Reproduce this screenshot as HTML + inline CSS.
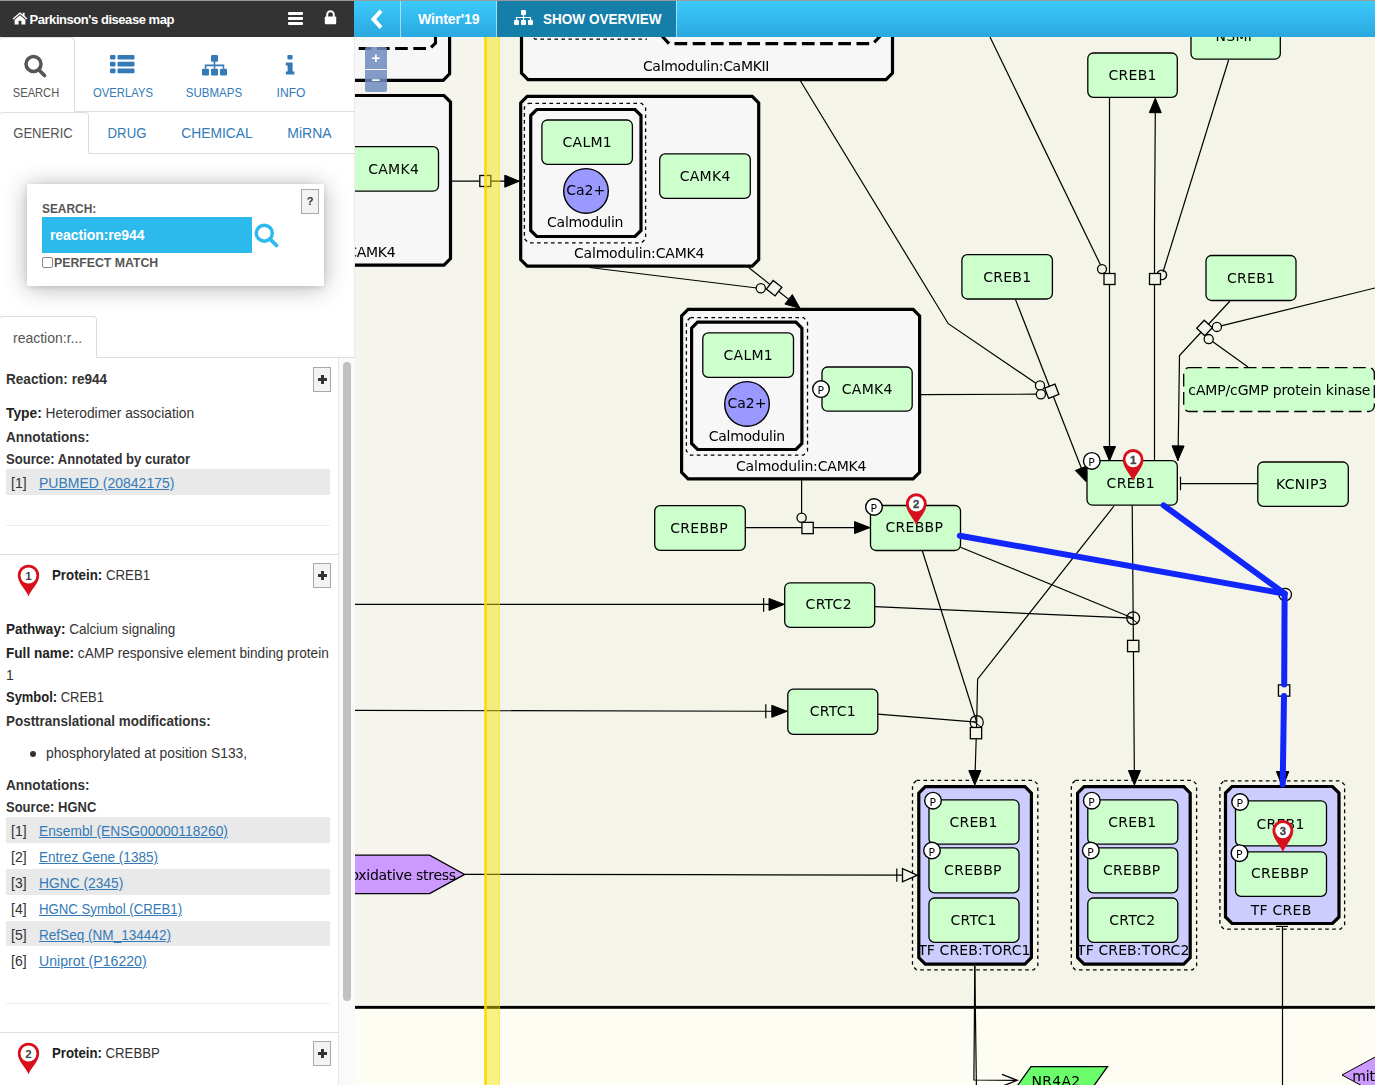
<!DOCTYPE html>
<html lang="en">
<head>
<meta charset="utf-8">
<title>Parkinson's disease map</title>
<style>
*{box-sizing:border-box;}
html,body{margin:0;padding:0;width:1375px;height:1085px;overflow:hidden;background:#fff;}
body{font-family:"Liberation Sans",sans-serif;font-size:14px;color:#333;position:relative;}
.abs{position:absolute;}
#topline{position:absolute;left:0;top:0;width:1375px;height:1px;background:#9a9a9a;z-index:50;}
#map{position:absolute;left:0;top:0;width:1375px;height:1085px;will-change:transform;}
#map text{font-family:"DejaVu Sans","Liberation Sans",sans-serif;fill:#000;}
#panel{position:absolute;left:0;top:0;width:355px;height:1085px;background:#fff;z-index:10;border-right:1px solid #ececec;}
#hdr{position:absolute;left:0;top:0;width:354px;height:37px;background:#333;color:#fff;}
#hdr .t{position:absolute;left:29.5px;top:12px;font-weight:bold;font-size:13px;letter-spacing:-0.45px;line-height:15px;white-space:nowrap;}
#bar{position:absolute;left:354px;top:0;width:1021px;height:37px;background:linear-gradient(#3ccafc,#2aa8df);z-index:12;color:#fff;}
#bar .sep{position:absolute;top:0;width:1px;height:37px;background:rgba(255,255,255,.55);}
#bar .ov{position:absolute;left:143px;top:0;width:179px;height:37px;background:#157fa9;}
#bar .lbl{position:absolute;font-weight:bold;font-size:14px;line-height:16px;white-space:nowrap;letter-spacing:-0.3px;}
.tab1{position:absolute;transform:translateX(-50%) scaleX(.865);font-size:13px;line-height:1;color:#337ab7;white-space:nowrap;top:86px;}
.tab2{position:absolute;top:126px;transform:translateX(-50%) scaleX(.96);font-size:14px;line-height:1;color:#337ab7;white-space:nowrap;}
.ln{position:absolute;background:#ddd;}
.b{font-weight:bold;}
.row{position:absolute;left:6px;white-space:nowrap;font-size:14px;line-height:16px;color:#333;}
.sx{display:inline-block;transform-origin:0 50%;white-space:nowrap;}
.row b{color:#222;}
.ann{position:absolute;left:6px;width:324px;height:25.7px;font-size:14px;line-height:16px;}
.ann.g{background:#e9e9e9;}
.ann .n{position:absolute;left:5px;top:6px;}
.ann .l{position:absolute;left:33px;top:6px;color:#337ab7;text-decoration:underline;white-space:nowrap;transform-origin:0 50%;}
.plus{position:absolute;left:313px;width:18px;height:25px;background:#f3f3f3;border:1px solid #a9a9a9;}
.plus:before{content:"";position:absolute;left:3.5px;top:10.2px;width:9.4px;height:2.8px;background:#333;}
.plus:after{content:"";position:absolute;left:6.8px;top:6.9px;width:2.8px;height:9.4px;background:#333;}
</style>
</head>
<body>
<svg id="map" width="1375" height="1085" viewBox="0 0 1375 1085">
<rect x="354" y="0" width="1021" height="1085" fill="#f4f4e9"/>
<rect x="354" y="0" width="131" height="1085" fill="#f5f5ee"/>
<rect x="354" y="1007" width="1021" height="78" fill="#fdfdf3"/>
<rect x="354" y="1005.9" width="1021" height="2.9" fill="#000"/>
<path d="M306.5,0 L443.1,0 L449.6,6.5 L449.6,73.8 L443.1,80.3 L306.5,80.3 L300,73.8 L300,6.5 Z" fill="#f7f7f7" stroke="#000" stroke-width="3.2"/>
<path d="M340.5,48.5 L430,48.5 L435.5,43 L435.5,30" fill="none" stroke="#000" stroke-width="3.1" stroke-dasharray="12.7 5.5"/>
<path d="M306.5,95.5 L444.0,95.5 L450.5,102.0 L450.5,258.7 L444.0,265.2 L306.5,265.2 L300,258.7 L300,102.0 Z" fill="#f7f7f7" stroke="#000" stroke-width="3.2"/>
<rect x="340" y="146.7" width="98.5" height="44.5" rx="5.5" ry="5.5" fill="#ccffcc" stroke="#000" stroke-width="1.3"/>
<text x="393.65" y="174.05" text-anchor="middle" font-size="14.0" letter-spacing="0.297">CAMK4</text>
<text x="371.28" y="256.80" text-anchor="middle" font-size="14.0" letter-spacing="-0.248">CAMK4</text>
<path d="M528.0,-20 L886.0,-20 L892.5,-13.5 L892.5,73.2 L886.0,79.7 L528.0,79.7 L521.5,73.2 L521.5,-13.5 Z" fill="#f7f7f7" stroke="#000" stroke-width="3.2"/>
<text x="706.05" y="70.70" text-anchor="middle" font-size="14.0" letter-spacing="-0.302">Calmodulin:CaMKII</text>
<path d="M529,33 L535,39.1 L647,39.1" fill="none" stroke="#000" stroke-width="1.3" stroke-dasharray="3.6 3.4"/>
<path d="M656.3,30 L669,43.6 L873,43.6 L886,30" fill="none" stroke="#000" stroke-width="3.1" stroke-dasharray="12.7 5.5" stroke-dashoffset="12.3"/>
<path d="M527.2,96.3 L752.2,96.3 L758.7,102.8 L758.7,259.7 L752.2,266.2 L527.2,266.2 L520.7,259.7 L520.7,102.8 Z" fill="#f7f7f7" stroke="#000" stroke-width="3.2"/>
<text x="639.12" y="257.60" text-anchor="middle" font-size="14.0" letter-spacing="-0.166">Calmodulin:CAMK4</text>
<path d="M528.4000000000001,103.3 L641.6000000000001,103.3 L645.6000000000001,107.3 L645.6000000000001,238.8 L641.6000000000001,242.8 L528.4000000000001,242.8 L524.4000000000001,238.8 L524.4000000000001,107.3 Z" fill="none" stroke="#000" stroke-width="1.3" stroke-dasharray="3.6 3.4"/>
<path d="M536.7,109.5 L635.0,109.5 L641.0,115.5 L641.0,230.5 L635.0,236.5 L536.7,236.5 L530.7,230.5 L530.7,115.5 Z" fill="#f7f7f7" stroke="#000" stroke-width="3.2"/>
<text x="585.16" y="226.80" text-anchor="middle" font-size="14.0" letter-spacing="-0.276">Calmodulin</text>
<rect x="541.9" y="120" width="90.5" height="44.3" rx="5.5" ry="5.5" fill="#ccffcc" stroke="#000" stroke-width="1.3"/>
<text x="587.29" y="147.25" text-anchor="middle" font-size="14.0" letter-spacing="0.289">CALM1</text>
<circle cx="586" cy="190.9" r="22.3" fill="#9999ff" stroke="#000" stroke-width="1.4"/>
<text x="585.70" y="194.80" text-anchor="middle" font-size="14.0" letter-spacing="0.000">Ca2+</text>
<rect x="659.7" y="153.9" width="90.6" height="44.5" rx="5.5" ry="5.5" fill="#ccffcc" stroke="#000" stroke-width="1.3"/>
<text x="705.15" y="181.25" text-anchor="middle" font-size="14.0" letter-spacing="0.297">CAMK4</text>
<path d="M688.1,309.4 L913.1,309.4 L919.6,315.9 L919.6,472.29999999999995 L913.1,478.79999999999995 L688.1,478.79999999999995 L681.6,472.29999999999995 L681.6,315.9 Z" fill="#f7f7f7" stroke="#000" stroke-width="3.2"/>
<text x="801.12" y="470.60" text-anchor="middle" font-size="14.0" letter-spacing="-0.166">Calmodulin:CAMK4</text>
<path d="M690.4,317.59999999999997 L803.5,317.59999999999997 L807.5,321.59999999999997 L807.5,451.09999999999997 L803.5,455.09999999999997 L690.4,455.09999999999997 L686.4,451.09999999999997 L686.4,321.59999999999997 Z" fill="none" stroke="#000" stroke-width="1.3" stroke-dasharray="3.6 3.4"/>
<path d="M697.6,322.2 L795.9,322.2 L801.9,328.2 L801.9,443.5 L795.9,449.5 L697.6,449.5 L691.6,443.5 L691.6,328.2 Z" fill="#f7f7f7" stroke="#000" stroke-width="3.2"/>
<text x="746.86" y="440.80" text-anchor="middle" font-size="14.0" letter-spacing="-0.276">Calmodulin</text>
<rect x="702.8" y="332.9" width="90.7" height="44.5" rx="5.5" ry="5.5" fill="#ccffcc" stroke="#000" stroke-width="1.3"/>
<text x="748.29" y="360.25" text-anchor="middle" font-size="14.0" letter-spacing="0.289">CALM1</text>
<circle cx="747" cy="403.9" r="22.3" fill="#9999ff" stroke="#000" stroke-width="1.4"/>
<text x="747.00" y="407.80" text-anchor="middle" font-size="14.0" letter-spacing="0.000">Ca2+</text>
<rect x="822" y="367" width="90.2" height="44.2" rx="5.5" ry="5.5" fill="#ccffcc" stroke="#000" stroke-width="1.3"/>
<text x="867.25" y="394.20" text-anchor="middle" font-size="14.0" letter-spacing="0.297">CAMK4</text>
<circle cx="821" cy="389.1" r="8.3" fill="#fff" stroke="#000" stroke-width="1.4"/>
<text x="820.7" y="394.3" text-anchor="middle" font-size="10.8">P</text>
<path d="M451,181.2 L521,181.2" fill="none" stroke="#000" stroke-width="1.2" />
<rect x="479.8" y="175.5" width="11" height="11" fill="#f4f4e9" stroke="#000" stroke-width="1.3"/>
<path d="M519.3,181.2 L504.8,187.2 L504.8,175.2 Z" fill="#000" stroke="#000" stroke-width="1"/>
<path d="M589.5,267.5 L757,288" fill="none" stroke="#000" stroke-width="1.2" />
<path d="M748.6,267.5 L799,307.5" fill="none" stroke="#000" stroke-width="1.2" />
<circle cx="760.8" cy="288.2" r="4.6" fill="#f4f4e9" stroke="#000" stroke-width="1.3"/>
<rect x="768.6" y="282.7" width="11" height="11" fill="#f4f4e9" stroke="#000" stroke-width="1.3" transform="rotate(38 774.1 288.2)"/>
<path d="M800.0,308.3 L784.9,304.1 L792.3,294.6 Z" fill="#000" stroke="#000" stroke-width="1"/>
<path d="M800.5,81 L948.3,323.7 L1037,384" fill="none" stroke="#000" stroke-width="1.2" />
<path d="M920.9,394.6 L1036.5,394.2" fill="none" stroke="#000" stroke-width="1.2" />
<path d="M1015.5,299.6 L1086,480" fill="none" stroke="#000" stroke-width="1.2" />
<circle cx="1040" cy="385.5" r="4.6" fill="#f4f4e9" stroke="#000" stroke-width="1.3"/>
<circle cx="1040.9" cy="394.2" r="4.6" fill="#f4f4e9" stroke="#000" stroke-width="1.3"/>
<rect x="1046.3" y="385.8" width="11" height="11" fill="#f4f4e9" stroke="#000" stroke-width="1.3" transform="rotate(-21 1051.8 391.3)"/>
<path d="M1086.2,481.8 L1075.3,470.5 L1086.5,466.1 Z" fill="#000" stroke="#000" stroke-width="1"/>
<path d="M990,37 L1102,268" fill="none" stroke="#000" stroke-width="1.2" />
<circle cx="1102" cy="269.1" r="4.5" fill="#f4f4e9" stroke="#000" stroke-width="1.3"/>
<path d="M1109.5,97 L1109.5,461" fill="none" stroke="#000" stroke-width="1.2" />
<rect x="1104.0" y="273.5" width="11" height="11" fill="#f4f4e9" stroke="#000" stroke-width="1.3"/>
<path d="M1109.5,461.0 L1103.5,446.5 L1115.5,446.5 Z" fill="#000" stroke="#000" stroke-width="1"/>
<path d="M1154.5,461 L1154.5,227 L1155.4,100" fill="none" stroke="#000" stroke-width="1.2" />
<circle cx="1161.8" cy="274.9" r="4.8" fill="#f4f4e9" stroke="#000" stroke-width="1.3"/>
<rect x="1149.5" y="273.5" width="11" height="11" fill="#f4f4e9" stroke="#000" stroke-width="1.3"/>
<path d="M1155.3,98.2 L1161.3,112.7 L1149.3,112.7 Z" fill="#000" stroke="#000" stroke-width="1"/>
<path d="M1228.6,60 L1163,272" fill="none" stroke="#000" stroke-width="1.2" />
<path d="M1230,301 L1179.5,355.5 L1178,461" fill="none" stroke="#000" stroke-width="1.2" />
<path d="M1217,326.9 L1375,288" fill="none" stroke="#000" stroke-width="1.2" />
<path d="M1209,339.1 L1248,367" fill="none" stroke="#000" stroke-width="1.2" />
<rect x="1199.0" y="322.5" width="11" height="11" fill="#f4f4e9" stroke="#000" stroke-width="1.3" transform="rotate(-47 1204.5 328)"/>
<circle cx="1216.9" cy="326.9" r="4.6" fill="#f4f4e9" stroke="#000" stroke-width="1.3"/>
<circle cx="1208.7" cy="339.1" r="4.6" fill="#f4f4e9" stroke="#000" stroke-width="1.3"/>
<path d="M1177.8,460.4 L1172.1,445.8 L1184.1,446.0 Z" fill="#000" stroke="#000" stroke-width="1"/>
<path d="M1180.5,483.7 L1257,483.7" fill="none" stroke="#000" stroke-width="1.2" />
<path d="M1180.5,476.7 L1180.5,490.2" fill="none" stroke="#000" stroke-width="1.2" />
<path d="M745,527.6 L870,527.6" fill="none" stroke="#000" stroke-width="1.2" />
<path d="M801.6,480 L801.6,518" fill="none" stroke="#000" stroke-width="1.2" />
<circle cx="801.6" cy="517.8" r="4.6" fill="#f4f4e9" stroke="#000" stroke-width="1.3"/>
<rect x="801.95" y="522.35" width="11.3" height="11.3" fill="#f4f4e9" stroke="#000" stroke-width="1.3"/>
<path d="M870.0,527.6 L854.5,533.6 L854.5,521.6 Z" fill="#000" stroke="#000" stroke-width="1"/>
<path d="M354,604.4 L784,604.4" fill="none" stroke="#000" stroke-width="1.2" />
<path d="M763.6,598 L763.6,611.8" fill="none" stroke="#000" stroke-width="1.2" />
<path d="M784.2,604.4 L769.0,610.4 L769.0,598.4 Z" fill="#000" stroke="#000" stroke-width="1"/>
<path d="M354,710.4 L787,711.3" fill="none" stroke="#000" stroke-width="1.2" />
<path d="M765.8,704.2 L765.8,718.2" fill="none" stroke="#000" stroke-width="1.2" />
<path d="M787.2,711.3 L771.8,717.3 L771.8,705.3 Z" fill="#000" stroke="#000" stroke-width="1"/>
<circle cx="1133.2" cy="618.2" r="6.4" fill="#f4f4e9" stroke="#000" stroke-width="1.2"/>
<path d="M1129.7,617.2 L1137.7,623.2" stroke="#000" stroke-width="1" fill="none"/>
<circle cx="976.7" cy="722.2" r="6.6" fill="#f4f4e9" stroke="#000" stroke-width="1.2"/>
<path d="M973.2,721.2 L981.2,727.2" stroke="#000" stroke-width="1" fill="none"/>
<path d="M874.7,606.6 L1133.2,618.2" fill="none" stroke="#000" stroke-width="1.2" />
<path d="M960.5,547.2 L1133.2,618.2" fill="none" stroke="#000" stroke-width="1.2" />
<path d="M1132.2,505 L1133.2,618.2 L1134.4,780" fill="none" stroke="#000" stroke-width="1.2" />
<path d="M1114,506 L977.6,679.1 L976.7,722.2" fill="none" stroke="#000" stroke-width="1.2" />
<path d="M922.3,550.8 L976.7,722.2" fill="none" stroke="#000" stroke-width="1.2" />
<path d="M877.8,714.2 L976.7,722.2" fill="none" stroke="#000" stroke-width="1.2" />
<path d="M976.7,722.2 L974.9,780" fill="none" stroke="#000" stroke-width="1.2" />
<rect x="1127.55" y="640.35" width="11.3" height="11.3" fill="#f4f4e9" stroke="#000" stroke-width="1.3"/>
<rect x="970.35" y="727.45" width="11.3" height="11.3" fill="#f4f4e9" stroke="#000" stroke-width="1.3"/>
<path d="M974.8,785.0 L968.8,770.5 L980.8,770.5 Z" fill="#000" stroke="#000" stroke-width="1"/>
<path d="M1134.4,785.0 L1128.4,770.5 L1140.4,770.5 Z" fill="#000" stroke="#000" stroke-width="1"/>
<path d="M340,855.2 L429.6,855.2 L464.6,874.4 L429.6,893.6 L340,893.6 Z" fill="#cc99ff" stroke="#000" stroke-width="1.3"/>
<text x="403.10" y="879.60" text-anchor="middle" font-size="14.0" letter-spacing="-0.289">oxidative stress</text>
<path d="M464.6,874.4 L700,874.6 L902,875.2" fill="none" stroke="#000" stroke-width="1.2" />
<path d="M896.8,868.5 L896.8,881.8" fill="none" stroke="#000" stroke-width="1.2" />
<path d="M902.5,868.6 L917.3,875.2 L902.5,881.8 Z" fill="#f4f4e9" stroke="#000" stroke-width="1.3"/>
<path d="M916.5,780.4000000000001 L1033.8,780.4000000000001 L1037.8,784.4000000000001 L1037.8,965.8000000000001 L1033.8,969.8000000000001 L916.5,969.8000000000001 L912.5,965.8000000000001 L912.5,784.4000000000001 Z" fill="none" stroke="#000" stroke-width="1.3" stroke-dasharray="3.6 3.4"/>
<path d="M925.3,786.7 L1024.8999999999999,786.7 L1031.3999999999999,793.2 L1031.3999999999999,957.6 L1024.8999999999999,964.1 L925.3,964.1 L918.8,957.6 L918.8,793.2 Z" fill="#ccccff" stroke="#000" stroke-width="3.2"/>
<text x="974.36" y="955.00" text-anchor="middle" font-size="14.0" letter-spacing="0.111">TF CREB:TORC1</text>
<rect x="929.0" y="799.8" width="90" height="44.4" rx="5.5" ry="5.5" fill="#ccffcc" stroke="#000" stroke-width="1.3"/>
<text x="973.54" y="826.50" text-anchor="middle" font-size="14.0" letter-spacing="0.281">CREB1</text>
<rect x="929.0" y="847.9" width="90" height="44.9" rx="5.5" ry="5.5" fill="#ccffcc" stroke="#000" stroke-width="1.3"/>
<text x="972.94" y="875.00" text-anchor="middle" font-size="14.0" letter-spacing="0.280">CREBBP</text>
<rect x="929.0" y="898" width="90" height="44.4" rx="5.5" ry="5.5" fill="#ccffcc" stroke="#000" stroke-width="1.3"/>
<text x="973.53" y="924.70" text-anchor="middle" font-size="14.0" letter-spacing="0.269">CRTC1</text>
<circle cx="933.0" cy="800.7" r="8.3" fill="#fff" stroke="#000" stroke-width="1.4"/>
<text x="932.7" y="805.9" text-anchor="middle" font-size="10.8">P</text>
<circle cx="932.0" cy="850.5" r="8.3" fill="#fff" stroke="#000" stroke-width="1.4"/>
<text x="931.7" y="855.7" text-anchor="middle" font-size="10.8">P</text>
<path d="M1075.3,780.4000000000001 L1192.6,780.4000000000001 L1196.6,784.4000000000001 L1196.6,965.8000000000001 L1192.6,969.8000000000001 L1075.3,969.8000000000001 L1071.3,965.8000000000001 L1071.3,784.4000000000001 Z" fill="none" stroke="#000" stroke-width="1.3" stroke-dasharray="3.6 3.4"/>
<path d="M1084.1,786.7 L1183.6999999999998,786.7 L1190.1999999999998,793.2 L1190.1999999999998,957.6 L1183.6999999999998,964.1 L1084.1,964.1 L1077.6,957.6 L1077.6,793.2 Z" fill="#ccccff" stroke="#000" stroke-width="3.2"/>
<text x="1133.26" y="955.00" text-anchor="middle" font-size="14.0" letter-spacing="0.111">TF CREB:TORC2</text>
<rect x="1087.8" y="799.8" width="90" height="44.4" rx="5.5" ry="5.5" fill="#ccffcc" stroke="#000" stroke-width="1.3"/>
<text x="1132.34" y="826.50" text-anchor="middle" font-size="14.0" letter-spacing="0.281">CREB1</text>
<rect x="1087.8" y="847.9" width="90" height="44.9" rx="5.5" ry="5.5" fill="#ccffcc" stroke="#000" stroke-width="1.3"/>
<text x="1131.74" y="875.00" text-anchor="middle" font-size="14.0" letter-spacing="0.280">CREBBP</text>
<rect x="1087.8" y="898" width="90" height="44.4" rx="5.5" ry="5.5" fill="#ccffcc" stroke="#000" stroke-width="1.3"/>
<text x="1132.33" y="924.70" text-anchor="middle" font-size="14.0" letter-spacing="0.269">CRTC2</text>
<circle cx="1091.8" cy="800.7" r="8.3" fill="#fff" stroke="#000" stroke-width="1.4"/>
<text x="1091.5" y="805.9" text-anchor="middle" font-size="10.8">P</text>
<circle cx="1090.8" cy="850.5" r="8.3" fill="#fff" stroke="#000" stroke-width="1.4"/>
<text x="1090.5" y="855.7" text-anchor="middle" font-size="10.8">P</text>
<path d="M1223.9,780.9 L1340.6000000000001,780.9 L1344.6000000000001,784.9 L1344.6000000000001,925.0999999999999 L1340.6000000000001,929.0999999999999 L1223.9,929.0999999999999 L1219.9,925.0999999999999 L1219.9,784.9 Z" fill="none" stroke="#000" stroke-width="1.3" stroke-dasharray="3.6 3.4"/>
<path d="M1232.0,786.5 L1332.5,786.5 L1339.0,793.0 L1339.0,917.0 L1332.5,923.5 L1232.0,923.5 L1225.5,917.0 L1225.5,793.0 Z" fill="#ccccff" stroke="#000" stroke-width="3.2"/>
<text x="1281.13" y="914.60" text-anchor="middle" font-size="14.0" letter-spacing="0.253">TF CREB</text>
<rect x="1235.5" y="800.8" width="91" height="45" rx="5.5" ry="5.5" fill="#ccffcc" stroke="#000" stroke-width="1.3"/>
<text x="1280.54" y="828.90" text-anchor="middle" font-size="14.0" letter-spacing="0.281">CREB1</text>
<rect x="1235.5" y="851.8" width="91" height="44.6" rx="5.5" ry="5.5" fill="#ccffcc" stroke="#000" stroke-width="1.3"/>
<text x="1279.84" y="877.80" text-anchor="middle" font-size="14.0" letter-spacing="0.280">CREBBP</text>
<circle cx="1240.1" cy="802" r="8.3" fill="#fff" stroke="#000" stroke-width="1.4"/>
<text x="1239.8" y="807.2" text-anchor="middle" font-size="10.8">P</text>
<circle cx="1239.5" cy="853.2" r="8.3" fill="#fff" stroke="#000" stroke-width="1.4"/>
<text x="1239.2" y="858.4" text-anchor="middle" font-size="10.8">P</text>
<path d="M974.8,966 L973.9,1080 L1016,1080.4" fill="none" stroke="#000" stroke-width="1.2" />
<path d="M974.8,966 L976.4,1086" fill="none" stroke="#000" stroke-width="1.2" />
<path d="M1002,1074.3 L1017.2,1080.3 L1002,1086.3" fill="none" stroke="#000" stroke-width="1.3"/>
<path d="M1282.5,926.4 L1282.5,1085" fill="none" stroke="#000" stroke-width="1.2" />
<path d="M1276,926.4 L1288,926.4" fill="none" stroke="#000" stroke-width="1.2" />
<path d="M1031,1066.6 L1107.5,1066.6 L1083,1101 L1006.5,1101 Z" fill="#6aff6a" stroke="#000" stroke-width="1.3"/>
<text x="1056.04" y="1086.40" text-anchor="middle" font-size="14.0" letter-spacing="0.286">NR4A2</text>
<path d="M1342,1075 L1377,1056 L1400,1056 L1400,1094 L1377,1094 Z" fill="#cc99ff" stroke="#000" stroke-width="1"/>
<text x="1352.30" y="1081.30" text-anchor="start" font-size="14.0" letter-spacing="-0.158">mito</text>
<rect x="1087.8" y="53" width="89.5" height="44.3" rx="5.5" ry="5.5" fill="#ccffcc" stroke="#000" stroke-width="1.3"/>
<text x="1132.69" y="80.25" text-anchor="middle" font-size="14.0" letter-spacing="0.281">CREB1</text>
<rect x="1191" y="10" width="89.3" height="49.2" rx="5.5" ry="5.5" fill="#ccffcc" stroke="#000" stroke-width="1.3"/>
<text x="1235.80" y="41.30" text-anchor="middle" font-size="14.0" letter-spacing="0.296">NSMF</text>
<rect x="961.9" y="254.6" width="90.5" height="44.4" rx="5.5" ry="5.5" fill="#ccffcc" stroke="#000" stroke-width="1.3"/>
<text x="1007.29" y="281.90" text-anchor="middle" font-size="14.0" letter-spacing="0.281">CREB1</text>
<rect x="1206" y="255.5" width="90" height="45" rx="5.5" ry="5.5" fill="#ccffcc" stroke="#000" stroke-width="1.3"/>
<text x="1251.14" y="283.10" text-anchor="middle" font-size="14.0" letter-spacing="0.281">CREB1</text>
<rect x="1183.7" y="367.6" width="190.6" height="43.9" rx="5.5" ry="5.5" fill="#ccffcc" stroke="#000" stroke-width="1.3" stroke-dasharray="12.7 5.5"/>
<text x="1279.32" y="394.65" text-anchor="middle" font-size="14.0" letter-spacing="-0.155">cAMP/cGMP protein kinase</text>
<rect x="1087" y="460.6" width="90.3" height="44.6" rx="5.5" ry="5.5" fill="#ccffcc" stroke="#000" stroke-width="1.3"/>
<text x="1130.74" y="488.00" text-anchor="middle" font-size="14.0" letter-spacing="0.281">CREB1</text>
<rect x="1257.8" y="462" width="90.5" height="44.3" rx="5.5" ry="5.5" fill="#ccffcc" stroke="#000" stroke-width="1.3"/>
<text x="1301.93" y="489.25" text-anchor="middle" font-size="14.0" letter-spacing="0.251">KCNIP3</text>
<rect x="654.7" y="505.7" width="90.6" height="44.6" rx="5.5" ry="5.5" fill="#ccffcc" stroke="#000" stroke-width="1.3"/>
<text x="699.14" y="532.70" text-anchor="middle" font-size="14.0" letter-spacing="0.280">CREBBP</text>
<rect x="870.5" y="505.5" width="90" height="45" rx="5.5" ry="5.5" fill="#ccffcc" stroke="#000" stroke-width="1.3"/>
<text x="914.34" y="531.70" text-anchor="middle" font-size="14.0" letter-spacing="0.280">CREBBP</text>
<rect x="784.7" y="582.8" width="90" height="44.6" rx="5.5" ry="5.5" fill="#ccffcc" stroke="#000" stroke-width="1.3"/>
<text x="828.73" y="609.20" text-anchor="middle" font-size="14.0" letter-spacing="0.269">CRTC2</text>
<rect x="787.8" y="689.1" width="90" height="45.3" rx="5.5" ry="5.5" fill="#ccffcc" stroke="#000" stroke-width="1.3"/>
<text x="832.93" y="715.80" text-anchor="middle" font-size="14.0" letter-spacing="0.269">CRTC1</text>
<circle cx="1091.8" cy="460.9" r="8.3" fill="#fff" stroke="#000" stroke-width="1.4"/>
<text x="1091.5" y="466.1" text-anchor="middle" font-size="10.8">P</text>
<circle cx="874" cy="507" r="8.3" fill="#fff" stroke="#000" stroke-width="1.4"/>
<text x="873.7" y="512.2" text-anchor="middle" font-size="10.8">P</text>
<circle cx="1285.2" cy="594.6" r="6.3" fill="#f4f4e9" stroke="#000" stroke-width="1.3"/>
<rect x="1278.4499999999998" y="684.85" width="11.3" height="11.3" fill="#f4f4e9" stroke="#000" stroke-width="1.3"/>
<path d="M1282.6,787.5 L1276.4,771.5 L1288.8,771.5 Z" fill="#000" stroke="#000" stroke-width="1"/>
<path d="M959.8,535.7 L1284.6,593.6" fill="none" stroke="#1026fa" stroke-width="6" stroke-linecap="round"/>
<path d="M1163.6,505.3 L1284.6,593.6" fill="none" stroke="#1026fa" stroke-width="6" stroke-linecap="round"/>
<path d="M1284.6,593.6 L1284.2,684.5" fill="none" stroke="#1026fa" stroke-width="6" stroke-linecap="round"/>
<path d="M1284.0,696 L1282.7,784.5" fill="none" stroke="#1026fa" stroke-width="6" stroke-linecap="round"/>
<g transform="translate(1133.1,481)"><path d="M0,0 C-2.5,-6.8 -10.4,-13.6 -10.4,-21.6 A10.4,10.4 0 1 1 10.4,-21.6 C10.4,-13.6 2.5,-6.8 0,0 Z" fill="#d80f1c"/><circle cx="0" cy="-21.4" r="7.6" fill="#fff"/><text x="0" y="-17.3" text-anchor="middle" font-size="11.5" font-weight="bold" style="font-family:'Liberation Sans',sans-serif;fill:#444;stroke:#444;stroke-width:0.3px">1</text></g>
<g transform="translate(916.3,525.2)"><path d="M0,0 C-2.5,-6.8 -10.4,-13.6 -10.4,-21.6 A10.4,10.4 0 1 1 10.4,-21.6 C10.4,-13.6 2.5,-6.8 0,0 Z" fill="#d80f1c"/><circle cx="0" cy="-21.4" r="7.6" fill="#fff"/><text x="0" y="-17.3" text-anchor="middle" font-size="11.5" font-weight="bold" style="font-family:'Liberation Sans',sans-serif;fill:#444;stroke:#444;stroke-width:0.3px">2</text></g>
<g transform="translate(1282.9,852)"><path d="M0,0 C-2.5,-6.8 -10.4,-13.6 -10.4,-21.6 A10.4,10.4 0 1 1 10.4,-21.6 C10.4,-13.6 2.5,-6.8 0,0 Z" fill="#d80f1c"/><circle cx="0" cy="-21.4" r="7.6" fill="#fff"/><text x="0" y="-17.3" text-anchor="middle" font-size="11.5" font-weight="bold" style="font-family:'Liberation Sans',sans-serif;fill:#444;stroke:#444;stroke-width:0.3px">3</text></g>
<rect x="484.2" y="0" width="15.8" height="1085" fill="#f8e200" fill-opacity="0.46"/>
<rect x="484.2" y="0" width="2.7" height="1085" fill="#f6da00" fill-opacity="0.85"/>
<rect x="499" y="0" width="1" height="1085" fill="#f7dc00" fill-opacity="0.35"/>
</svg>

<!-- zoom control -->
<div class="abs" style="left:365px;top:47px;width:22px;height:22px;background:rgba(110,140,190,.85);border-radius:2px 2px 0 0;z-index:5;color:#fff;font-weight:bold;font-size:15px;line-height:22px;text-align:center;">+</div>
<div class="abs" style="left:365px;top:70px;width:22px;height:22px;background:rgba(110,140,190,.85);border-radius:0 0 2px 2px;z-index:5;color:#fff;font-weight:bold;font-size:15px;line-height:20px;text-align:center;">&minus;</div>

<div id="bar">
  <svg class="abs" style="left:14px;top:8px" width="16" height="22" viewBox="0 0 16 22"><path d="M13,2.8 L5.5,11.2 L13,19.6" fill="none" stroke="#fff" stroke-width="4"/></svg>
  <div class="sep" style="left:46px"></div>
  <div class="lbl" style="left:64px;top:11px;letter-spacing:-0.1px;">Winter'19</div>
  <div class="sep" style="left:142px"></div>
  <div class="ov"></div>
  <svg class="abs" style="left:160px;top:10px" width="19" height="16" viewBox="0 0 19 16"><g fill="#fff"><rect x="7" y="0" width="5" height="5" rx="1"/><rect x="0" y="10" width="5" height="5" rx="1"/><rect x="7" y="10" width="5" height="5" rx="1"/><rect x="14" y="10" width="5" height="5" rx="1"/></g><path d="M9.5,5 V10 M2.5,10 V7.5 H16.5 V10" fill="none" stroke="#fff" stroke-width="1.2"/></svg>
  <div class="lbl sx" style="left:189px;top:11px;transform:scaleX(.967);letter-spacing:0;">SHOW OVERVIEW</div>
  <div class="sep" style="left:322px"></div>
</div>

<div id="panel">
  <div id="hdr">
    <svg class="abs" style="left:12px;top:11px" width="16" height="14" viewBox="0 0 16 14"><path d="M8,1.2 L0.6,7.4 L1.5,8.4 L8,3 L14.5,8.4 L15.4,7.4 L12.6,5 V1.8 H10.8 V3.5 Z" fill="#fff"/><path d="M8,4.2 L2.6,8.7 V13.4 H6.6 V9.8 H9.4 V13.4 H13.4 V8.7 Z" fill="#fff"/></svg>
    <div class="t">Parkinson's disease map</div>
    <div class="abs" style="left:288px;top:12px;width:15px;height:3px;background:#fff;border-radius:1px;box-shadow:0 5px 0 #fff,0 10px 0 #fff;"></div>
    <svg class="abs" style="left:324px;top:10px" width="13" height="15" viewBox="0 0 13 15"><path d="M3.2,7 V4.6 a3.3,3.3 0 0 1 6.6,0 V7" fill="none" stroke="#fff" stroke-width="1.9"/><rect x="0.8" y="6.6" width="11.4" height="7.6" rx="1" fill="#fff"/></svg>
  </div>

  <!-- main tabs -->
  <div class="ln" style="left:0;top:111px;width:355px;height:1px;"></div>
  <div class="abs" style="left:-1px;top:37px;width:76px;height:75px;border:1px solid #ddd;border-bottom:1px solid #fff;border-radius:4px 4px 0 0;background:#fff;"></div>
  <svg class="abs" style="left:23px;top:53px" width="24" height="25" viewBox="0 0 24 25"><circle cx="10.5" cy="11" r="7.5" fill="none" stroke="#555" stroke-width="3.5"/><path d="M16,17 L21.5,22.5" stroke="#555" stroke-width="3.6" stroke-linecap="round"/></svg>
  <div class="tab1" style="left:36px;color:#555;transform:translateX(-50%) scaleX(.855);">SEARCH</div>
  <svg class="abs" style="left:110px;top:55px" width="25" height="19" viewBox="0 0 25 19"><g fill="#337ab7"><rect x="0" y="0" width="5.5" height="4.6" rx="1"/><rect x="7.5" y="0" width="17" height="4.6" rx="1"/><rect x="0" y="6.8" width="5.5" height="4.6" rx="1"/><rect x="7.5" y="6.8" width="17" height="4.6" rx="1"/><rect x="0" y="13.6" width="5.5" height="4.6" rx="1"/><rect x="7.5" y="13.6" width="17" height="4.6" rx="1"/></g></svg>
  <div class="tab1" style="left:123px;">OVERLAYS</div>
  <svg class="abs" style="left:202px;top:55px" width="25" height="21.2" viewBox="0 0 25 20" preserveAspectRatio="none"><g fill="#337ab7"><rect x="9" y="0" width="7" height="6.4" rx="1.2"/><rect x="0" y="13" width="7" height="6.4" rx="1.2"/><rect x="9" y="13" width="7" height="6.4" rx="1.2"/><rect x="18" y="13" width="7" height="6.4" rx="1.2"/></g><path d="M12.5,6 V13 M3.5,13 V9.8 H21.5 V13" fill="none" stroke="#337ab7" stroke-width="1.5"/></svg>
  <div class="tab1" style="left:214.3px;transform:translateX(-50%) scaleX(.885);">SUBMAPS</div>
  <svg class="abs" style="left:285px;top:55px" width="10" height="20" viewBox="0 0 10 20"><g fill="#337ab7"><rect x="2.4" y="0" width="5.2" height="4.4" rx="0.8"/><path d="M0.8,7.6 H7.6 V16.4 H9.4 V19.4 H0.8 V16.4 H2.6 V10.6 H0.8 Z"/></g></svg>
  <div class="tab1" style="left:291px;transform:translateX(-50%) scaleX(.93);">INFO</div>

  <!-- sub tabs -->
  <div class="ln" style="left:0;top:153px;width:355px;height:1px;"></div>
  <div class="abs" style="left:-1px;top:112px;width:90px;height:42px;border:1px solid #ddd;border-bottom:1px solid #fff;border-radius:4px 4px 0 0;background:#fff;"></div>
  <div class="tab2" style="left:43.2px;color:#555;transform:translateX(-50%) scaleX(.934);">GENERIC</div>
  <div class="tab2" style="left:127px;transform:translateX(-50%) scaleX(.94);">DRUG</div>
  <div class="tab2" style="left:216.5px;transform:translateX(-50%) scaleX(.985);">CHEMICAL</div>
  <div class="tab2" style="left:309.5px;transform:translateX(-50%) scaleX(1.0);">MiRNA</div>

  <!-- search card -->
  <div class="abs" style="left:27px;top:184px;width:297px;height:102px;background:#fff;box-shadow:0 2px 22px 0 rgba(0,0,0,.30),0 1px 5px 0 rgba(0,0,0,.10);"></div>
  <div class="abs b sx" style="left:42px;top:201px;font-size:13px;line-height:15px;color:#555;transform:scaleX(.915);">SEARCH:</div>
  <div class="abs" style="left:42px;top:217px;width:210px;height:36px;background:#2cb9ec;"></div>
  <div class="abs b" style="left:50px;top:227px;font-size:14px;line-height:16px;color:#fff;letter-spacing:-0.1px;">reaction:re944</div>
  <svg class="abs" style="left:253px;top:222px" width="26" height="26" viewBox="0 0 26 26"><circle cx="11.3" cy="11.2" r="8" fill="none" stroke="#2dbbed" stroke-width="3.5"/><path d="M17.6,17.6 L23.4,23.4" stroke="#2dbbed" stroke-width="3.8" stroke-linecap="round"/></svg>
  <div class="abs" style="left:42px;top:257px;width:11px;height:11px;border:1px solid #8a8a8a;border-radius:2px;background:#fff;"></div>
  <div class="abs b sx" style="left:54px;top:255px;font-size:13px;line-height:15px;color:#555;transform:scaleX(.945);">PERFECT MATCH</div>
  <div class="abs b" style="left:301px;top:189px;width:18px;height:25px;background:#f3f3f3;border:1px solid #a9a9a9;font-size:11px;line-height:23px;text-align:center;color:#333;">?</div>

  <!-- results tab -->
  <div class="ln" style="left:0;top:357px;width:355px;height:1px;"></div>
  <div class="abs" style="left:-1px;top:316px;width:98px;height:42px;border:1px solid #ddd;border-bottom:1px solid #fff;border-radius:4px 4px 0 0;background:#fff;"></div>
  <div class="abs" style="left:13px;top:330px;font-size:14px;line-height:16px;color:#555;">reaction:r...</div>

  <!-- scrollbar -->
  <div class="abs" style="left:338px;top:358px;width:17px;height:727px;background:#fafafa;border-left:1px solid #e6e6e6;"></div>
  <div class="abs" style="left:343.3px;top:361.5px;width:7.6px;height:639.5px;background:#c1c1c1;border-radius:4px;"></div>

  <!-- reaction -->
  <div class="row b" style="top:371px;font-size:14px;"><span class="sx" style="transform:scaleX(.97)">Reaction: re944</span></div>
  <div class="plus" style="top:367px;"></div>
  <div class="row" style="top:405px;"><span class="sx" style="transform:scaleX(.984)"><b>Type:</b> Heterodimer association</span></div>
  <div class="row b" style="top:429px;"><span class="sx" style="transform:scaleX(.969)">Annotations:</span></div>
  <div class="row b" style="top:451px;"><span class="sx" style="transform:scaleX(.934)">Source: Annotated by curator</span></div>
  <div class="ann g" style="top:469px;"><span class="n">[1]</span><span class="l">PUBMED (20842175)</span></div>
  <div class="ln" style="left:6px;top:525px;width:324px;height:1px;background:#eee;"></div>
  <div class="ln" style="left:0;top:554px;width:338px;height:1px;"></div>

  <!-- protein 1 -->
  <svg class="abs" style="left:16.9px;top:563.8px;overflow:visible" width="23" height="33" viewBox="0 0 23 33"><path d="M11.5,32.2 C9,25.5 0.8,19 0.8,11.4 A10.7,10.7 0 1 1 22.2,11.4 C22.2,19 14,25.5 11.5,32.2 Z" fill="#d80f1c"/><circle cx="11.5" cy="11.5" r="8" fill="#fff"/><text x="11.5" y="15.6" text-anchor="middle" font-size="11.5" font-weight="bold" font-family="'Liberation Sans',sans-serif" fill="#444">1</text></svg>
  <div class="row" style="left:52px;top:567px;"><span class="sx" style="transform:scaleX(.949)"><b>Protein:</b> CREB1</span></div>
  <div class="plus" style="top:563px;"></div>
  <div class="row" style="top:621px;"><span class="sx" style="transform:scaleX(.967)"><b>Pathway:</b> Calcium signaling</span></div>
  <div class="row" style="top:645px;"><span class="sx" style="transform:scaleX(.972)"><b>Full name:</b> cAMP responsive element binding protein</span></div>
  <div class="row" style="top:667px;">1</div>
  <div class="row" style="top:689px;"><span class="sx" style="transform:scaleX(.925)"><b>Symbol:</b> CREB1</span></div>
  <div class="row b" style="top:713px;"><span class="sx" style="transform:scaleX(.96)">Posttranslational modifications:</span></div>
  <div class="abs" style="left:29.5px;top:750.5px;width:6px;height:6px;border-radius:50%;background:#333;"></div>
  <div class="row" style="left:46px;top:745px;"><span class="sx" style="transform:scaleX(.986)">phosphorylated at position S133,</span></div>
  <div class="row b" style="top:777px;"><span class="sx" style="transform:scaleX(.969)">Annotations:</span></div>
  <div class="row b" style="top:799px;"><span class="sx" style="transform:scaleX(.929)">Source: HGNC</span></div>
  <div class="ann g" style="top:817.1px;"><span class="n">[1]</span><span class="l" style="transform:scaleX(.984)">Ensembl (ENSG00000118260)</span></div>
  <div class="ann" style="top:843px;"><span class="n">[2]</span><span class="l" style="transform:scaleX(.968)">Entrez Gene (1385)</span></div>
  <div class="ann g" style="top:869px;"><span class="n">[3]</span><span class="l" style="transform:scaleX(.985)">HGNC (2345)</span></div>
  <div class="ann" style="top:894.9px;"><span class="n">[4]</span><span class="l" style="transform:scaleX(.943)">HGNC Symbol (CREB1)</span></div>
  <div class="ann g" style="top:920.8px;"><span class="n">[5]</span><span class="l" style="transform:scaleX(.969)">RefSeq (NM_134442)</span></div>
  <div class="ann" style="top:946.7px;"><span class="n">[6]</span><span class="l" style="transform:scaleX(1.01)">Uniprot (P16220)</span></div>
  <div class="ln" style="left:6px;top:1003px;width:324px;height:1px;background:#eee;"></div>
  <div class="ln" style="left:0;top:1032px;width:338px;height:1px;"></div>

  <!-- protein 2 -->
  <svg class="abs" style="left:16.9px;top:1042.2px;overflow:visible" width="23" height="33" viewBox="0 0 23 33"><path d="M11.5,32.2 C9,25.5 0.8,19 0.8,11.4 A10.7,10.7 0 1 1 22.2,11.4 C22.2,19 14,25.5 11.5,32.2 Z" fill="#d80f1c"/><circle cx="11.5" cy="11.5" r="8" fill="#fff"/><text x="11.5" y="15.6" text-anchor="middle" font-size="11.5" font-weight="bold" font-family="'Liberation Sans',sans-serif" fill="#444">2</text></svg>
  <div class="row" style="left:52px;top:1045px;"><span class="sx" style="transform:scaleX(.943)"><b>Protein:</b> CREBBP</span></div>
  <div class="plus" style="top:1041px;"></div>
</div>
<div id="topline"></div>
</body>
</html>
